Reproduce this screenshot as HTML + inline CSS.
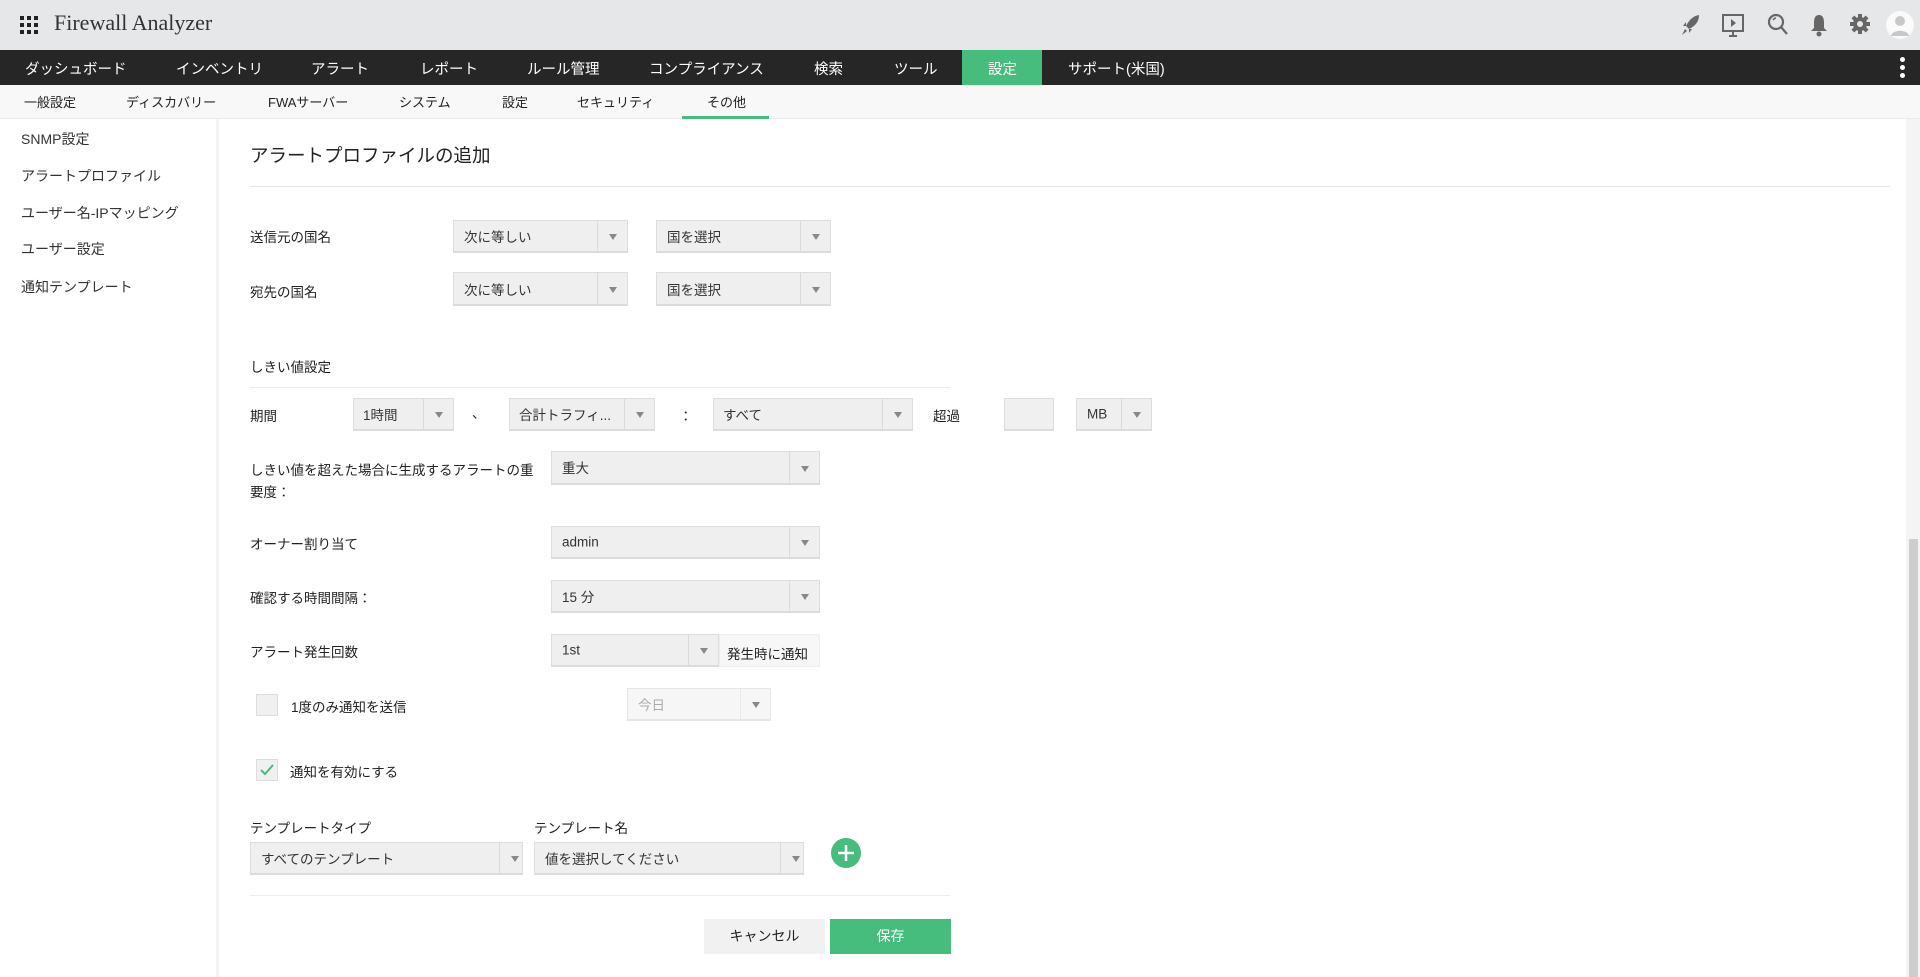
<!DOCTYPE html>
<html><head><meta charset="utf-8"><style>
*{box-sizing:border-box;margin:0;padding:0}
body{width:1920px;height:977px;overflow:hidden;background:#fff;font-family:"Liberation Sans","Noto Sans CJK JP",sans-serif;color:#222;position:relative;font-size:14px}
.a{position:absolute;white-space:nowrap}
#hdr{position:absolute;left:0;top:0;width:1920px;height:50px;background:#e6e7e9}
#nav{position:absolute;left:0;top:50px;width:1920px;height:35px;background:#262626}
#nav span{position:absolute;top:8px;color:#fff;font-size:14.5px}
#sub{position:absolute;left:0;top:85px;width:1920px;height:34px;background:#f8f8f8;border-bottom:1px solid #ececec}
#sub span{position:absolute;top:7px;font-size:13px;color:#222}
#side{position:absolute;left:0;top:119px;width:219px;height:858px;background:#fff;border-right:3px solid #f3f3f3}
#side span{position:absolute;left:21px;font-size:14px;color:#333}
.sel{position:absolute;background:#efefef;border:1px solid #ddd;border-bottom:2px solid #dcdcdc;font-size:13.5px;color:#333}
.sel .t{position:absolute;left:10px;top:50%;transform:translateY(-50%)}
.sel .d{position:absolute;right:0;top:0;bottom:0;width:30px;border-left:1px solid #dadada}
.sel .d:after{content:"";position:absolute;left:11px;top:50%;margin-top:-2px;border-left:4px solid transparent;border-right:4px solid transparent;border-top:6px solid #888}
.lbl{position:absolute;font-size:13.5px;color:#222;white-space:nowrap}
.hl{position:absolute;height:1px;background:#e4e4e4}
</style></head><body>
<div id="hdr">
 <svg class="a" style="left:20px;top:16px" width="18" height="18" viewBox="0 0 18 18" fill="#222"><rect x="0" y="0" width="4" height="4"/><rect x="7" y="0" width="4" height="4"/><rect x="14" y="0" width="4" height="4"/><rect x="0" y="7" width="4" height="4"/><rect x="7" y="7" width="4" height="4"/><rect x="14" y="7" width="4" height="4"/><rect x="0" y="14" width="4" height="4"/><rect x="7" y="14" width="4" height="4"/><rect x="14" y="14" width="4" height="4"/></svg>
 <span class="a" style="left:54px;top:10px;font-family:'Liberation Serif','DejaVu Serif',serif;font-size:22px;color:#333">Firewall Analyzer</span>
 <svg class="a" style="left:1681px;top:14px" width="20" height="22" viewBox="0 0 20 22" fill="#666"><path d="M18 1 C12 2 8 6 5 12 L8 15 C14 12 18 8 18 1Z"/><path d="M5 12 L2 12 L5 8Z M8 15 L8 19 L11 15Z M4 15 L1 21 L6 17Z"/></svg>
 <svg class="a" style="left:1720px;top:12px" width="26" height="26" viewBox="0 0 26 26" fill="none" stroke="#666" stroke-width="2"><rect x="3" y="3" width="20" height="16"/><path d="M11 7 L16 11 L11 15Z" fill="#666" stroke="none"/><path d="M13 19 L13 24 M9 24 L17 24"/></svg>
 <svg class="a" style="left:1767px;top:13px" width="22" height="24" viewBox="0 0 22 24" fill="none" stroke="#666" stroke-width="2.2"><circle cx="9" cy="9" r="7"/><path d="M14 14 L20 21"/><path d="M6 7 A4 4 0 0 1 9 5" stroke-width="1.5"/></svg>
 <svg class="a" style="left:1810px;top:13px" width="18" height="24" viewBox="0 0 18 24" fill="#666"><path d="M9 2 C5 2 4 6 4 9 L4 15 L1 18 L17 18 L14 15 L14 9 C14 6 13 2 9 2Z"/><circle cx="9" cy="21" r="2.5"/></svg>
 <svg class="a" style="left:1849px;top:13px" width="22" height="22" viewBox="0 0 22 22"><g stroke="#666" stroke-width="4" stroke-linecap="butt"><path d="M11 1V21M1 11H21M3.9 3.9L18.1 18.1M18.1 3.9L3.9 18.1"/></g><circle cx="11" cy="11" r="7" fill="#666"/><circle cx="11" cy="11" r="3" fill="#e6e7e9"/></svg>
 <svg class="a" style="left:1886px;top:11px" width="28" height="28" viewBox="0 0 28 28"><circle cx="14" cy="14" r="14" fill="#fafafa"/><circle cx="14" cy="10" r="5" fill="#c8c8c8"/><path d="M5 25 C6 18 22 18 23 25Z" fill="#c8c8c8"/></svg>
</div>
<div id="nav">
 <span style="left:25px">ダッシュボード</span>
 <span style="left:176px">インベントリ</span>
 <span style="left:311px">アラート</span>
 <span style="left:420px">レポート</span>
 <span style="left:527px">ルール管理</span>
 <span style="left:649px">コンプライアンス</span>
 <span style="left:814px">検索</span>
 <span style="left:894px">ツール</span>
 <div class="a" style="left:962px;top:0;width:80px;height:35px;background:#46bc7d"></div>
 <span style="left:988px">設定</span>
 <span style="left:1068px">サポート(米国)</span>
 <div class="a" style="left:1900px;top:7px;width:5px;height:5px;border-radius:50%;background:#fff"></div>
 <div class="a" style="left:1900px;top:15px;width:5px;height:5px;border-radius:50%;background:#fff"></div>
 <div class="a" style="left:1900px;top:23px;width:5px;height:5px;border-radius:50%;background:#fff"></div>
</div>
<div id="sub">
 <span style="left:24px">一般設定</span>
 <span style="left:126px">ディスカバリー</span>
 <span style="left:268px">FWAサーバー</span>
 <span style="left:399px">システム</span>
 <span style="left:502px">設定</span>
 <span style="left:577px">セキュリティ</span>
 <span style="left:707px">その他</span>
 <div class="a" style="left:682px;top:31px;width:87px;height:3px;background:#46bc7d"></div>
</div>
<div id="side">
 <span style="top:10px">SNMP設定</span>
 <span style="top:47px">アラートプロファイル</span>
 <span style="top:84px">ユーザー名-IPマッピング</span>
 <span style="top:120px">ユーザー設定</span>
 <span style="top:158px">通知テンプレート</span>
</div>
<div class="a" style="left:1906px;top:119px;width:14px;height:858px;background:#f4f4f4"></div>
<div class="a" style="left:1909px;top:539px;width:9px;height:438px;background:#cdcdcd"></div>

<span class="a" style="left:250px;top:142px;font-size:18.5px;color:#222">アラートプロファイルの追加</span>
<div class="hl" style="left:250px;top:186px;width:1640px"></div>

<span class="lbl" style="left:250px;top:226px">送信元の国名</span>
<div class="sel" style="left:453px;top:220px;width:175px;height:33px"><span class="t">次に等しい</span><span class="d"></span></div>
<div class="sel" style="left:656px;top:220px;width:175px;height:33px"><span class="t">国を選択</span><span class="d"></span></div>
<span class="lbl" style="left:250px;top:281px">宛先の国名</span>
<div class="sel" style="left:453px;top:272px;width:175px;height:34px"><span class="t">次に等しい</span><span class="d"></span></div>
<div class="sel" style="left:656px;top:272px;width:175px;height:34px"><span class="t">国を選択</span><span class="d"></span></div>

<span class="lbl" style="left:250px;top:356px">しきい値設定</span>
<div class="hl" style="left:250px;top:387px;width:700px;background:#ececec"></div>

<span class="lbl" style="left:250px;top:405px">期間</span>
<div class="sel" style="left:353px;top:398px;width:101px;height:33px"><span class="t" style="left:9px">1時間</span><span class="d"></span></div>
<span class="lbl" style="left:472px;top:402px">、</span>
<div class="sel" style="left:509px;top:398px;width:146px;height:33px"><span class="t" style="left:9px">合計トラフィ...</span><span class="d"></span></div>
<span class="lbl" style="left:679px;top:405px">：</span>
<div class="sel" style="left:713px;top:398px;width:200px;height:33px"><span class="t" style="left:9px">すべて</span><span class="d"></span></div>
<span class="lbl" style="left:933px;top:405px">超過</span>
<div class="sel" style="left:1004px;top:398px;width:50px;height:33px;background:#f0f0f0"></div>
<div class="sel" style="left:1076px;top:398px;width:76px;height:33px"><span class="t">MB</span><span class="d"></span></div>

<span class="lbl" style="left:250px;top:459px">しきい値を超えた場合に生成するアラートの重</span>
<span class="lbl" style="left:250px;top:481px">要度：</span>
<div class="sel" style="left:551px;top:451px;width:269px;height:34px"><span class="t" style="top:15px">重大</span><span class="d"></span></div>

<span class="lbl" style="left:250px;top:533px">オーナー割り当て</span>
<div class="sel" style="left:551px;top:526px;width:269px;height:33px"><span class="t">admin</span><span class="d"></span></div>

<span class="lbl" style="left:250px;top:587px">確認する時間間隔：</span>
<div class="sel" style="left:551px;top:580px;width:269px;height:33px"><span class="t">15 分</span><span class="d"></span></div>

<span class="lbl" style="left:250px;top:641px">アラート発生回数</span>
<div class="sel" style="left:551px;top:634px;width:168px;height:33px"><span class="t">1st</span><span class="d"></span></div>
<div class="a" style="left:719px;top:634px;width:101px;height:33px;background:#f7f7f7;border:1px solid #eee;font-size:13.5px;padding:8px 0 0 7px">発生時に通知</div>

<div class="a" style="left:256px;top:694px;width:22px;height:22px;background:#f0f0f0;border:1px solid #ddd"></div>
<span class="lbl" style="left:291px;top:696px">1度のみ通知を送信</span>
<div class="sel" style="left:627px;top:688px;width:144px;height:33px;background:#f6f6f6;border-color:#e6e6e6;color:#aaa"><span class="t">今日</span><span class="d" style="border-left-color:#eaeaea"></span></div>

<div class="a" style="left:256px;top:759px;width:22px;height:22px;background:#f0f0f0;border:1px solid #ddd"></div>
<svg class="a" style="left:260px;top:764px" width="14" height="12" viewBox="0 0 14 12" fill="none" stroke="#46bc7d" stroke-width="2"><path d="M1 6 L5 10 L13 1"/></svg>
<span class="lbl" style="left:290px;top:761px">通知を有効にする</span>

<span class="lbl" style="left:250px;top:817px">テンプレートタイプ</span>
<span class="lbl" style="left:534px;top:817px">テンプレート名</span>
<div class="sel" style="left:250px;top:842px;width:273px;height:33px"><span class="t">すべてのテンプレート</span><span class="d" style="width:23px"></span></div>
<div class="sel" style="left:534px;top:842px;width:270px;height:33px"><span class="t">値を選択してください</span><span class="d" style="width:23px"></span></div>
<svg class="a" style="left:831px;top:838px" width="30" height="30" viewBox="0 0 30 30"><circle cx="15" cy="15" r="15" fill="#46bc7d"/><path d="M15 7V23M7 15H23" stroke="#fff" stroke-width="2.5"/></svg>

<div class="hl" style="left:250px;top:895px;width:700px;background:#ececec"></div>
<div class="a" style="left:704px;top:919px;width:121px;height:35px;background:#f1f1f1;font-size:14px;text-align:center;line-height:35px">キャンセル</div>
<div class="a" style="left:830px;top:919px;width:121px;height:35px;background:#46bc7d;color:#fff;font-size:14px;text-align:center;line-height:35px">保存</div>
</body></html>
